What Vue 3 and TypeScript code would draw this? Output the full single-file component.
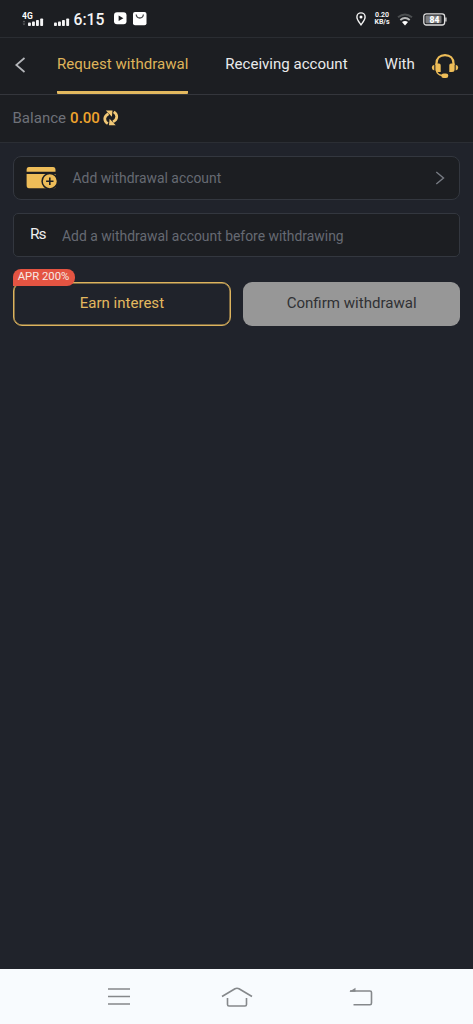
<script setup lang="ts">
import { ref } from 'vue'

interface Tab { id: string; label: string }

const tabs: Tab[] = [
  { id: 'request', label: 'Request withdrawal' },
  { id: 'account', label: 'Receiving account' },
  { id: 'records', label: 'With' },
]
const active = ref('request')
const balance = ref('0.00')
</script>

<template>
  <div class="screen">
    <header class="status">
      <svg class="signals" width="50" height="20" viewBox="0 0 50 20">
        <g fill="#f4f4f5">
          <rect x="6" y="12.6" width="2.900" height="3.4" rx=".8" /><rect x="10" y="11.6" width="2.900" height="4.4" rx=".8" />
          <rect x="14" y="10" width="2.900" height="6" rx=".8" /><rect x="18.200" y="8.4" width="2.900" height="7.6" rx=".8" />
          <rect x="32" y="12.6" width="2.900" height="3.4" rx=".8" /><rect x="36" y="11.6" width="2.900" height="4.4" rx=".8" />
          <rect x="40" y="10" width="2.900" height="6" rx=".8" /><rect x="44.200" y="8.4" width="2.900" height="7.6" rx=".8" />
          <path d="M.6 12.3 2 10.5l1.400 1.800zM.6 13.500 2 15.300l1.400-1.800z" fill="#66686b" />
        </g>
        <text x="0" y="8.500" class="fourg">4G</text>
      </svg>
      <span class="clock">6:15</span>
      <svg class="play" width="13" height="13" viewBox="0 0 13 13"><rect width="12.500" height="12" y=".3" rx="3" fill="#fff" /><path d="M4.600 3.500 9.400 6.300 4.600 9.100z" fill="#1c1e22" /></svg>
      <svg class="bag" width="14" height="14" viewBox="0 0 14 14"><rect width="13.500" height="13.300" rx="2" fill="#fff" /><path d="M3.200 2.500Q3.600 6 6.800 6T10.400 2.500" fill="none" stroke="#45474a" stroke-width="1.300" /></svg>
      <svg class="pin" width="10" height="14" viewBox="0 0 10 14"><path d="M5 12.800C3.500 10.700.9 7.900.9 5A4.100 4.100 0 0 1 9.100 5C9.100 7.900 6.500 10.700 5 12.800z" fill="none" stroke="#f2f2f2" stroke-width="1.400" /><circle cx="5" cy="5" r="1.500" fill="#fff" /></svg>
      <div class="speed"><span>0.20</span><span>KB/s</span></div>
      <svg class="wifi" width="16" height="13" viewBox="0 0 16 13"><g fill="none" stroke-width="1.900"><path d="M1 4.300Q8-1.500 15 4.300" stroke="#4b4e50" /><path d="M3.300 7Q8 3 12.700 7" stroke="#b9babb" /></g><path d="M5 9Q8 6.800 11 9L8 12.500z" fill="#fff" /></svg>
      <svg class="battery" width="25" height="13" viewBox="0 0 25 13"><rect x=".8" y=".8" width="20.800" height="11.200" rx="2.500" fill="none" stroke="#dedede" stroke-width="1.300" /><rect x="2.500" y="2.500" width="16" height="7.800" rx="1" fill="#7d7e80" /><path d="M22.900 4.500v4" stroke="#ddd" stroke-width="1.300" /><text x="11.500" y="9.800" text-anchor="middle" class="level">84</text></svg>
    </header>

    <nav class="tabbar">
      <svg class="back" width="12" height="18" viewBox="0 0 12 18"><path d="M10.500 2 2.300 9l8.200 7" fill="none" stroke="#b4b6ba" stroke-width="1.700" /></svg>
      <div class="tabs">
        <button v-for="t in tabs" :key="t.id" class="tab" :class="{ active: active === t.id }" @click="active = t.id">{{ t.label }}</button>
      </div>
      <svg class="support" width="28" height="26" viewBox="0 0 28 26">
        <path d="M5.500 12V10.500C5.500 5.300 9 2.200 14 2.200S22.500 5.300 22.500 10.500V12" fill="none" stroke="#eebd58" stroke-width="2.200" />
        <path d="M4.400 10.500H8Q9.700 10.500 9.700 12.200V19H7Q4.400 19 4.400 16.500zM23.600 10.500H20Q18.300 10.500 18.300 12.200V19H21Q23.600 19 23.600 16.500z" fill="#eebd58" />
        <path d="M3.300 11.700v5.800Q.8 17 .8 14.600T3.300 11.700zM24.700 11.700v5.800Q27.200 17 27.200 14.600T24.700 11.700z" fill="#eebd58" />
        <path d="M5.500 17.500Q6.200 21.800 11 22.500" fill="none" stroke="#eebd58" stroke-width="1.500" />
        <rect x="10.300" y="20.400" width="7" height="4.600" rx="2.300" fill="#eebd58" />
      </svg>
    </nav>

    <section class="balance">
      <span>Balance</span><strong>{{ balance }}</strong>
      <svg width="16" height="16" viewBox="0 0 16 16"><g fill="none" stroke="#f1c876" stroke-width="2.700"><path d="M4.800 13.700C.6 11 .6 6.300 5.500 3.700" /><path d="M10.700 1.900C14.900 4.600 14.900 9.300 10 11.900" /></g><path d="M2.800 .4H9.500L8.900 6.800zM12.700 15.200H6L6.600 8.800z" fill="#f1c876" /></svg>
    </section>

    <main class="content">
      <div class="field add">
        <svg class="wallet" width="32" height="24" viewBox="0 0 32 24"><path d="M.6 4Q.6 1 3 1H27Q29.500 1 29.500 4V5.700H.6zM.6 8H29.500V21Q29.500 22.200 28 22.200H3Q.6 22.200.6 19z" fill="#eebd58" /><circle cx="23.800" cy="15.200" r="7.700" fill="#eebd58" stroke="#1c1e22" stroke-width="1.500" /><path d="M23.800 11.500v7.400M20.100 15.200h7.400" stroke="#1c1e22" stroke-width="1.600" /></svg>
        <span class="hint">Add withdrawal account</span>
        <svg class="chevron" width="10" height="14" viewBox="0 0 10 14"><path d="M1.300 1 8.500 7 1.300 13" fill="none" stroke="#777b83" stroke-width="1.400" /></svg>
      </div>
      <div class="field amount">
        <span class="currency">Rs</span>
        <span class="hint">Add a withdrawal account before withdrawing</span>
      </div>
      <div class="actions">
        <button class="btn earn">Earn interest<span class="badge">APR 200%</span></button>
        <button class="btn confirm">Confirm withdrawal</button>
      </div>
    </main>

    <footer class="system">
      <svg width="24" height="20" viewBox="0 0 24 20"><path d="M1 2H23M1 9.500H23M1 17H23" stroke="#85888b" stroke-width="1.700" /></svg>
      <svg width="32" height="22" viewBox="0 0 32 22"><g fill="none" stroke="#85888b" stroke-width="1.600" stroke-linejoin="round"><path d="M1 10.500 14 2.700Q16 1.700 18 2.700L31 10.500" /><path d="M6.500 12V18.500Q6.500 20 8 20H24Q25.500 20 25.500 18.500V12" /></g></svg>
      <svg width="24" height="20" viewBox="0 0 24 20"><path d="M1 4H21Q22.500 4 22.500 5.500V16Q22.500 17.700 21 17.700H4.500" fill="none" stroke="#85888b" stroke-width="1.600" /><path d="M.3 4.700 6.500.8V4.700z" fill="#85888b" /></svg>
    </footer>
  </div>
</template>

<style>
html, body { margin: 0; background: #20232b; }
</style>
<style scoped>
* { box-sizing: border-box; }
.screen { width: 473px; height: 1024px; display: flex; flex-direction: column; overflow: hidden; background: #20232b; font-family: Roboto, sans-serif; font-size: 15.050px; }
svg { display: block; flex: none; }
button { font: inherit; padding: 0; background: none; border: 0; white-space: nowrap; }
.status { height: 38px; flex: none; display: flex; align-items: center; padding-left: 22px; background: #1c1e22; border-bottom: 1px solid #2a2d32; color: #f4f4f5; }
.signals { margin-top: 3px; }
.fourg { font: 700 8.500px Roboto, sans-serif; fill: #fff; }
.clock { width: 31px; margin: 1px 0 0 1.500px; font-size: 15.700px; font-weight: 500; white-space: nowrap; }
.play { margin-left: 9px; }
.bag { margin-left: 6px; }
.pin { margin-left: 209.500px; }
.speed { width: 16px; margin-left: 8px; display: flex; flex-direction: column; align-items: center; font-size: 7px; line-height: 7px; font-weight: 700; }
.wifi { margin: 2px 0 0 6.500px; }
.battery { margin: 1px 0 0 10px; }
.level { font: 900 8.500px Roboto, sans-serif; fill: #fff; }
.tabbar { height: 57px; flex: none; display: flex; align-items: center; padding-left: 14px; background: #1c1e22; border-bottom: 1px solid #34363c; }
.back { margin-top: -2px; }
.tabs { align-self: stretch; display: flex; gap: 37px; width: 360px; margin-left: 31px; }
.tab { height: 56px; padding-bottom: 2px; color: #e9eaec; border-bottom: 3px solid transparent; }
.tab.active { color: #dfb35a; border-bottom-color: #e2b85f; border-radius: 1px; }
.support { margin: -1px 0 0 13.500px; }
.balance { height: 48px; flex: none; display: flex; align-items: center; padding: 0 12.500px 1px; background: #1c1e22; border-bottom: 1px solid #2b2e34; color: #6e7179; }
.balance strong { margin: 0 3px 0 4px; color: #efa42d; font-weight: 500; }
.content { flex: 1; padding: 13px 13px 0 12.500px; }
.field { height: 44px; margin-bottom: 13px; display: flex; align-items: center; background: #1c1e22; border: 1px solid #33373f; border-radius: 8px; }
.amount { border-radius: 5px; }
.hint { color: #666a73; font-size: 13.900px; }
.wallet { margin-left: 12.500px; }
.add .hint { margin-left: 14.500px; }
.chevron { margin: 0 14px 0 auto; }
.currency { width: 32px; margin: -2px 0 0 16.500px; color: #eee; font-size: 15.500px; letter-spacing: -1px; }
.amount .hint { padding-top: 2px; }
.actions { display: flex; gap: 12px; margin-top: 25px; }
.btn { flex: 1; height: 44px; padding-bottom: 2px; border-radius: 9px; }
.earn { position: relative; color: #e3b85f; border: 1px solid #dcb35d; box-shadow: inset 0 0 0 .5px #dcb35d; }
.confirm { color: #303134; background: #979797; }
.badge { position: absolute; left: -1px; top: -14px; width: 62px; height: 17px; border-radius: 8px 8px 8px 0; background: #e45442; color: #f7e9e5; font-size: 11.300px; line-height: 16px; }
.system { height: 55px; flex: none; display: flex; align-items: center; padding-left: 107px; background: #f8fbfe; }
.system svg:nth-child(2) { margin: 0 96px 0 90px; }
</style>
